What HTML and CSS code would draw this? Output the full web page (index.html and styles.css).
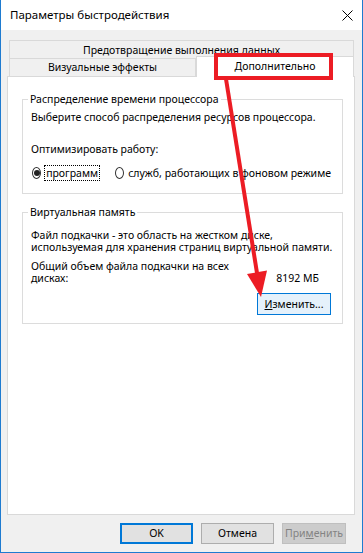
FILE: index.html
```html
<!DOCTYPE html>
<html lang="ru">
<head>
<meta charset="utf-8">
<link rel="stylesheet" href="styles.css">
</head>
<body>
<div class="window">
  <div class="titlebar">
    <span class="title">Параметры быстродействия</span>
    <svg class="close" width="11" height="11" viewBox="0 0 11 11"><path d="M0.5 0.5 L10.5 10.5 M10.5 0.5 L0.5 10.5" stroke="#000" stroke-width="1" fill="none"/></svg>
  </div>
  <div class="content">
    <div class="tabs">
      <div class="tab-top">Предотвращение выполнения данных</div>
      <div class="tab-row">
        <div class="tab">Визуальные эффекты</div>
        <div class="tab active">Дополнительно</div>
      </div>
      <div class="panel">
        <fieldset class="group g1">
          <legend>Распределение времени процессора</legend>
          <p class="p1">Выберите способ распределения ресурсов процессора.</p>
          <p class="p2">Оптимизировать работу:</p>
          <div class="radios">
            <span class="radio checked"></span>
            <span class="rlabel focus">программ</span>
            <span class="radio second"></span>
            <span class="rlabel">служб, работающих в фоновом режиме</span>
          </div>
        </fieldset>
        <fieldset class="group g2">
          <legend>Виртуальная память</legend>
          <p class="p3">Файл подкачки - это область на жестком диске,<br>используемая для хранения страниц виртуальной памяти.</p>
          <div class="total">
            <p class="p4">Общий объем файла подкачки на всех<br>дисках:</p>
            <span class="size">8192 МБ</span>
          </div>
          <div class="change-row">
            <button class="btn change"><u>И</u>зменить...</button>
          </div>
        </fieldset>
      </div>
    </div>
    <div class="buttons">
      <button class="btn ok">OK</button>
      <button class="btn cancel">Отмена</button>
      <button class="btn apply">При<u>м</u>енить</button>
    </div>
  </div>
</div>
<svg class="annot" width="363" height="553" viewBox="0 0 363 553">
  <rect x="216" y="55" width="115" height="23" fill="none" stroke="#ec1c24" stroke-width="4"/>
  <line x1="226" y1="79" x2="257" y2="273" stroke="#ec1c24" stroke-width="4"/>
  <polygon points="247,274 267,270.5 261,297" fill="#ec1c24"/>
</svg>
</body>
</html>
```

FILE: styles.css
```css
html, body {
  margin: 0;
  padding: 0;
}
body {
  position: relative;
  width: 363px;
  height: 553px;
  overflow: hidden;
  font-family: "Noto Sans", sans-serif;
  font-size: 10.5px;
  color: #000;
  white-space: nowrap;
}
.window {
  box-sizing: border-box;
  width: 363px;
  height: 553px;
  border: 1px solid #1e7bd0;
  border-top: none;
  background: #f0f0f0;
  display: flex;
  flex-direction: column;
}
.titlebar {
  height: 30px;
  flex: none;
  background: #fff;
  display: flex;
  align-items: center;
  justify-content: space-between;
  padding: 0 9px 0 9px;
}
.title {
  font-size: 11.5px;
  line-height: 16px;
}
.close {
  display: block;
}
.content {
  display: flex;
  flex-direction: column;
}
.tabs {
  margin: 10px 0 0 6px;
  width: 348px;
}
.tab-top {
  box-sizing: border-box;
  margin-left: 2px;
  width: 345px;
  height: 18px;
  border: 1px solid #d9d9d9;
  border-bottom: none;
  background: #f0f0f0;
  text-align: center;
  line-height: 15px;
  padding-top: 2px;
}
.tab-row {
  display: flex;
  align-items: flex-start;
  height: 18px;
  margin-left: 2px;
}
.tab {
  box-sizing: border-box;
  width: 187px;
  height: 18px;
  border: 1px solid #d9d9d9;
  border-bottom: none;
  background: #f0f0f0;
  text-align: center;
  line-height: 15px;
  padding-top: 1px;
}
.tab.active {
  position: relative;
  z-index: 1;
  width: 158px;
  height: 21px;
  margin-top: -2px;
  background: #fff;
  padding-top: 2px;
}
.panel {
  box-sizing: border-box;
  height: 439px;
  background: #fff;
  border: 1px solid #d9d9d9;
  padding: 15px 11px 0 14px;
}
.group {
  margin: 0;
  padding: 0 11px 0 8px;
  border: 1px solid #dcdcdc;
  min-width: 0;
}
.group legend {
  padding: 0 2px;
  margin-left: -3px;
  line-height: 14px;
}
p {
  margin: 0;
  line-height: 13px;
}
.g1 {
  padding-bottom: 12px;
}
.p1 {
  margin-top: 5px;
}
.p2 {
  margin-top: 19px;
}
.radios {
  display: flex;
  align-items: center;
  height: 16px;
  margin-top: 9px;
}
.radio {
  box-sizing: border-box;
  width: 12px;
  height: 12px;
  border: 1px solid #333;
  border-radius: 50%;
  margin-left: 1px;
  display: flex;
  align-items: center;
  justify-content: center;
  background: #fff;
}
.radio.checked::after {
  content: "";
  width: 6px;
  height: 6px;
  border-radius: 50%;
  background: #222;
}
.radio.second {
  margin-left: 15px;
}
.rlabel {
  margin-left: 4px;
  line-height: 13px;
}
.rlabel.focus {
  margin-left: 3px;
  border: 1px dotted #000;
  padding: 1px 1px 0 1px;
}
.g2 {
  margin-top: 11px;
  padding-bottom: 8px;
}
.p3 {
  margin-top: 10px;
  line-height: 12px;
}
.total {
  display: flex;
  justify-content: space-between;
  align-items: flex-end;
  margin-top: 7px;
}
.p4 {
  line-height: 12px;
}
.size {
  line-height: 12px;
  margin-right: 12px;
}
.change-row {
  display: flex;
  justify-content: flex-end;
  margin-top: 9px;
}
.btn {
  box-sizing: border-box;
  font-family: "Noto Sans", sans-serif;
  font-size: 10.5px;
  color: #000;
  height: 21px;
  padding: 0;
  margin: 0;
  border: 1px solid #adadad;
  background: #e1e1e1;
  line-height: 17px;
}
.btn u {
  text-decoration: underline;
}
.change {
  width: 74px;
  height: 22px;
  background: #e5f1fb;
  border-color: #0078d7;
}
.buttons {
  display: flex;
  justify-content: flex-end;
  gap: 8px;
  margin-top: 8px;
  padding-right: 16px;
}
.ok {
  width: 73px;
  border: 2px solid #0078d7;
}
.cancel {
  width: 73px;
}
.apply {
  width: 64px;
  background: #cccccc;
  border-color: #bfbfbf;
  color: #838383;
}
.annot {
  position: absolute;
  left: 0;
  top: 0;
  z-index: 10;
  pointer-events: none;
}
```
